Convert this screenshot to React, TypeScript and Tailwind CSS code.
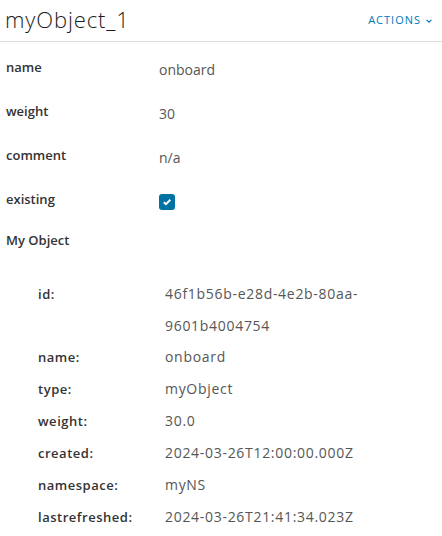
import React from "react";

const top = [
  { k: "name", v: "onboard" },
  { k: "weight", v: "30" },
  { k: "comment", v: "n/a" },
];

const nested = [
  { k: "id:", v: "46f1b56b-e28d-4e2b-80aa-9601b4004754" },
  { k: "name:", v: "onboard" },
  { k: "type:", v: "myObject" },
  { k: "weight:", v: "30.0" },
  { k: "created:", v: "2024-03-26T12:00:00.000Z" },
  { k: "namespace:", v: "myNS" },
  { k: "lastrefreshed:", v: "2024-03-26T21:41:34.023Z" },
];

export default function App() {
  return (
    <div className="w-[442px] h-[536px] bg-white overflow-hidden" style={{ fontFamily: '"Open Sans", "Noto Sans", sans-serif' }}>
      <div className="h-[42px] border-b border-[#dddddd] flex items-center justify-between pl-[5px] pr-[9px]">
        <div className="text-[22px] font-light text-[#1a1a1a] leading-none pb-[3px] tracking-[0.04em]">myObject_1</div>
        <div className="flex items-center gap-[4px] text-[#0079b8] text-[11px] font-medium tracking-[0.09em]">
          <span>ACTIONS</span>
          <svg width="8" height="8" viewBox="0 0 10 10" fill="none" stroke="#0079b8" strokeWidth="1.5">
            <path d="M2 3.5 L5 6.5 L8 3.5" />
          </svg>
        </div>
      </div>
      <div className="pl-[6px] pt-[15px]">
        {top.map((r) => (
          <div key={r.k} className="flex h-[44px]">
            <div className="w-[153px] text-[13px] font-semibold text-[#333] leading-[20px]">{r.k}</div>
            <div className="text-[14px] text-[#565656] leading-[20px] pt-[3px]">{r.v}</div>
          </div>
        ))}
        <div className="flex h-[41px]">
          <div className="w-[153px] text-[13px] font-semibold text-[#333] leading-[20px]">existing</div>
          <div className="pt-[5px]">
            <div className="w-[16px] h-[16px] rounded-[3px] bg-[#0072a3] flex items-center justify-center">
              <svg width="10" height="10" viewBox="0 0 10 10" fill="none" stroke="white" strokeWidth="2">
                <path d="M1.8 5.2 L4 7.2 L8.3 2.8" />
              </svg>
            </div>
          </div>
        </div>
        <div className="text-[13px] font-semibold text-[#333] leading-[20px]">My Object</div>
      </div>
      <div className="pl-[38px] pt-[28px]">
        {nested.map((r) => (
          <div key={r.k} className="flex">
            <div className="w-[127px] text-[13px] font-semibold text-[#333] leading-[32px] tracking-[0.04em]">{r.k}</div>
            <div className="w-[215px] text-[14px] text-[#565656] leading-[31.5px] break-words tracking-[0.05em]">{r.v}</div>
          </div>
        ))}
      </div>
    </div>
  );
}
